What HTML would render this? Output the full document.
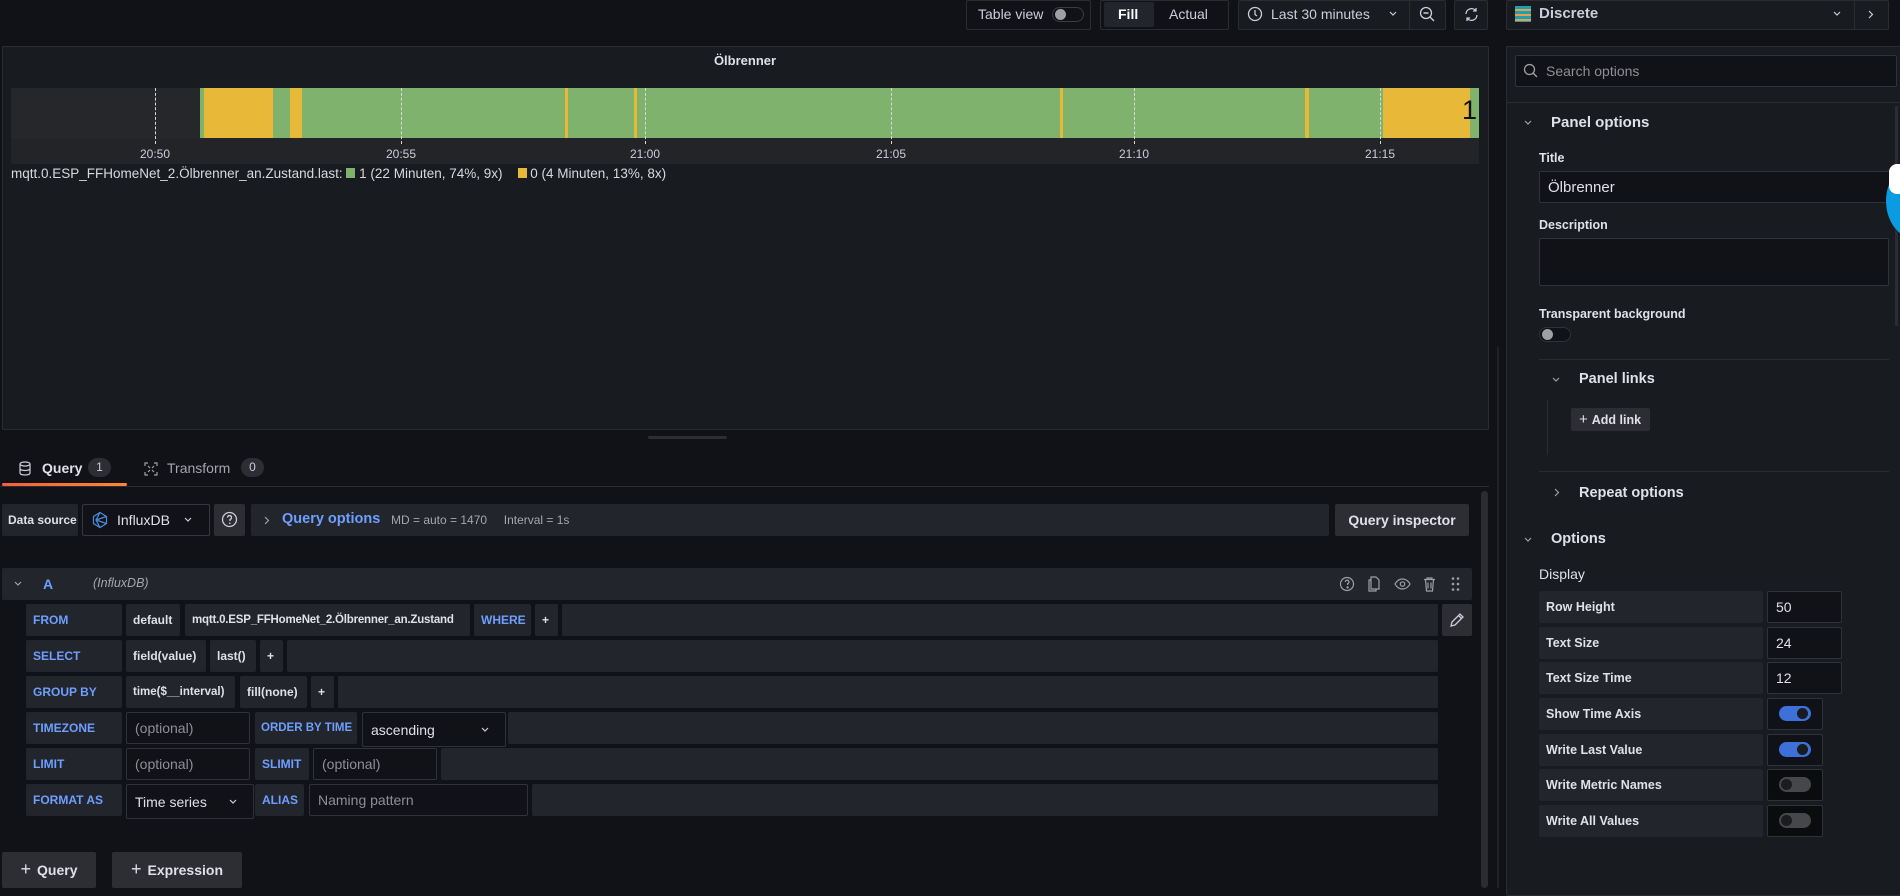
<!DOCTYPE html>
<html><head><meta charset="utf-8"><style>
*{box-sizing:border-box;margin:0;padding:0}
body{width:1900px;height:888px;overflow:hidden;background:#111217;font-family:"Liberation Sans",sans-serif;color:#ccccdc;position:relative;font-size:14px}
.a{position:absolute;white-space:nowrap}
.box{position:absolute;background:#181b1f;border:1px solid #2a2c31;border-radius:2px}
.lbl{position:absolute;background:#22252b;border-radius:2px;display:flex;align-items:center;padding-left:7px;font-size:12px;font-weight:bold;white-space:nowrap;overflow:hidden}
.blue{color:#6e9fff}
.inp{position:absolute;background:#111217;border:1px solid #2f3238;border-radius:2px;display:flex;align-items:center;padding-left:8px;font-size:14px;white-space:nowrap}
.ph{color:#8e8e96}
.dash{position:absolute;width:0;border-left:1px dashed #d8d8d8;top:88px;height:56px}
.tl{position:absolute;top:147px;font-size:12px;color:#ccccdc;transform:translateX(-50%)}
.seg{position:absolute;top:88px;height:50px}
.g{background:#7eb26d}.y{background:#e8b838}
.tog{position:absolute;width:32px;height:15px;border-radius:8px}
.knob{position:absolute;top:2px;width:11px;height:11px;border-radius:50%}
</style></head><body>

<!-- top bar -->
<div class="box" style="left:966px;top:0;width:125px;height:30px;background:#111217"></div>
<div class="a" style="left:978px;top:6px;font-size:14px;color:#ccccdc">Table view</div>
<div class="tog" style="left:1052px;top:7px;border:1px solid #3a3c42;background:#111217"><div class="knob" style="left:2px;top:1px;background:#9fa0a6"></div></div>
<div class="box" style="left:1100px;top:0;width:129px;height:30px;background:#111217"></div>
<div class="a" style="left:1104px;top:2px;width:50px;height:25px;background:#22252b;border-radius:2px"></div>
<div class="a" style="left:1118px;top:6px;font-weight:bold;color:#fff">Fill</div>
<div class="a" style="left:1169px;top:6px">Actual</div>
<div class="box" style="left:1238px;top:0;width:208px;height:30px;background:#181b1f"></div>
<svg class="a" style="left:1247px;top:6px" width="16" height="16" viewBox="0 0 16 16"><circle cx="8" cy="8" r="6.5" fill="none" stroke="#ccccdc" stroke-width="1.3"/><path d="M8 4v4.5l2 1.5" fill="none" stroke="#ccccdc" stroke-width="1.3"/></svg>
<div class="a" style="left:1271px;top:6px">Last 30 minutes</div>
<svg class="a" style="left:1389px;top:11px" width="8" height="6" viewBox="0 0 8 6"><path d="M1 1l3 3 3-3" fill="none" stroke="#ccccdc" stroke-width="1.2"/></svg>
<div class="a" style="left:1409px;top:0;width:1px;height:30px;background:#2a2c31"></div>
<svg class="a" style="left:1419px;top:6px" width="17" height="17" viewBox="0 0 17 17"><circle cx="7" cy="7" r="5.5" fill="none" stroke="#ccccdc" stroke-width="1.3"/><path d="M4.5 7h5M11 11l4 4" stroke="#ccccdc" stroke-width="1.4"/></svg>
<div class="box" style="left:1454px;top:0;width:34px;height:30px"></div>
<svg class="a" style="left:1463px;top:6px" width="17" height="17" viewBox="0 0 17 17"><path d="M3 8a5.5 5.5 0 0 1 10-3M14 9a5.5 5.5 0 0 1-10 3" fill="none" stroke="#ccccdc" stroke-width="1.3"/><path d="M13 2v3h-3M4 15v-3h3" fill="none" stroke="#ccccdc" stroke-width="1.3"/></svg>
<div class="box" style="left:1506px;top:0;width:383px;height:30px"></div>
<div class="a" style="left:1515px;top:6px;width:16px;height:16px;background:repeating-linear-gradient(#1ca0b5 0 3px,#e8a048 3px 5px)"></div>
<div class="a" style="left:1539px;top:5px;font-weight:bold;font-size:15px">Discrete</div>
<svg class="a" style="left:1833px;top:11px" width="8" height="6" viewBox="0 0 8 6"><path d="M1 1l3 3 3-3" fill="none" stroke="#ccccdc" stroke-width="1.2"/></svg>
<div class="a" style="left:1854px;top:0;width:1px;height:30px;background:#2a2c31"></div>
<svg class="a" style="left:1868px;top:10px" width="6" height="9" viewBox="0 0 6 9"><path d="M1 1l3.5 3.5L1 8" fill="none" stroke="#ccccdc" stroke-width="1.2"/></svg>

<!-- panel -->
<div class="box" style="left:2px;top:46px;width:1487px;height:384px"></div>
<div class="a" style="left:0;width:1490px;top:53px;text-align:center;font-size:13px;font-weight:bold;color:#e0e0ea">Ölbrenner</div>
<div class="a" style="left:11px;top:88px;width:1468px;height:76px;background:#232428"></div>
<div class="seg" style="left:11px;width:189px;background:#26272b"></div>
<div class="seg g" style="left:200px;width:4px"></div>
<div class="seg y" style="left:204px;width:69px"></div>
<div class="seg g" style="left:273px;width:17px"></div>
<div class="seg y" style="left:290px;width:12px"></div>
<div class="seg g" style="left:302px;width:263px"></div>
<div class="seg y" style="left:565px;width:3px"></div>
<div class="seg g" style="left:568px;width:66px"></div>
<div class="seg y" style="left:634px;width:3px"></div>
<div class="seg g" style="left:637px;width:423px"></div>
<div class="seg y" style="left:1060px;width:3px"></div>
<div class="seg g" style="left:1063px;width:242px"></div>
<div class="seg y" style="left:1305px;width:4px"></div>
<div class="seg g" style="left:1309px;width:74px"></div>
<div class="seg y" style="left:1383px;width:87px"></div>
<div class="seg g" style="left:1470px;width:9px"></div>
<div class="a" style="left:1462px;top:95px;font-size:27px;color:#111;font-weight:300">1</div>
<div class="dash" style="left:155px"></div><div class="dash" style="left:401px"></div><div class="dash" style="left:645px"></div><div class="dash" style="left:891px"></div><div class="dash" style="left:1134px"></div><div class="dash" style="left:1380px"></div>
<div class="tl" style="left:155px">20:50</div><div class="tl" style="left:401px">20:55</div><div class="tl" style="left:645px">21:00</div><div class="tl" style="left:891px">21:05</div><div class="tl" style="left:1134px">21:10</div><div class="tl" style="left:1380px">21:15</div>
<div class="a" style="left:11px;top:166px;font-size:13.5px;color:#d8d9e0">mqtt.0.ESP_FFHomeNet_2.Ölbrenner_an.Zustand.last: <span style="display:inline-block;width:9px;height:10px;background:#7eb26d"></span> 1 (22 Minuten, 74%, 9x) &nbsp;&nbsp; <span style="display:inline-block;width:9px;height:10px;background:#e8b838"></span> 0 (4 Minuten, 13%, 8x)</div>
<div class="a" style="left:648px;top:436px;width:79px;height:3px;background:#2c2e33;border-radius:2px"></div>

<!-- tabs -->
<svg class="a" style="left:19px;top:461px" width="12" height="15" viewBox="0 0 12 15"><ellipse cx="6" cy="3" rx="5" ry="2" fill="none" stroke="#ccccdc" stroke-width="1.2"/><path d="M1 3v9c0 1.2 2.2 2 5 2s5-.8 5-2V3M1 7.5c0 1.2 2.2 2 5 2s5-.8 5-2" fill="none" stroke="#ccccdc" stroke-width="1.2"/></svg>
<div class="a" style="left:42px;top:460px;font-weight:bold;color:#e0e0ea">Query</div>
<div class="a" style="left:88px;top:458px;width:23px;height:19px;border-radius:10px;background:#2c2e33;font-size:12px;text-align:center;line-height:19px">1</div>
<svg class="a" style="left:144px;top:462px" width="14" height="14" viewBox="0 0 14 14"><path d="M1 4V1h3M10 1h3v3M13 10v3h-3M4 13H1v-3M4 4l2 2M10 4l-2 2M4 10l2-2M10 10l-2-2" fill="none" stroke="#9fa0a6" stroke-width="1.2"/></svg>
<div class="a" style="left:167px;top:460px;color:#a5a6ae">Transform</div>
<div class="a" style="left:241px;top:458px;width:23px;height:19px;border-radius:10px;background:#2c2e33;font-size:12px;text-align:center;line-height:19px">0</div>
<div class="a" style="left:2px;top:483px;width:125px;height:3px;border-radius:2px;background:linear-gradient(90deg,#f55f3e,#ff8833)"></div>
<div class="a" style="left:0;top:486px;width:1489px;height:1px;background:#2a2c31"></div>

<!-- left scrollbar -->
<div class="a" style="left:1481px;top:491px;width:7px;height:397px;background:#2a2c31;border-radius:4px"></div>
<div class="a" style="left:1497px;top:347px;width:2px;height:541px;background:#1f2126"></div>

<!-- data source row -->
<div class="lbl" style="left:2px;top:504px;width:76px;height:32px;color:#e0e0ea;padding-left:6px">Data source</div>
<div class="inp" style="left:82px;top:504px;width:128px;height:32px;border-color:#34373d"><svg width="18" height="18" viewBox="0 0 18 18" style="margin-right:8px"><path d="M9 1.5l6.5 4v7L9 16.5 2.5 12.5v-7z M9 1.5L5 9l4 7.5M5 9l10.5-3.5M5 9l10.5 3.5" fill="none" stroke="#4c8bdc" stroke-width="1.2"/></svg><span style="color:#e0e0ea">InfluxDB</span><svg style="margin-left:14px" width="8" height="6" viewBox="0 0 8 6"><path d="M1 1l3 3 3-3" fill="none" stroke="#ccccdc" stroke-width="1.2"/></svg></div>
<div class="a" style="left:214px;top:504px;width:31px;height:32px;background:#2c2e33;border-radius:2px"></div>
<svg class="a" style="left:221px;top:511px" width="17" height="17" viewBox="0 0 17 17"><circle cx="8.5" cy="8.5" r="7" fill="none" stroke="#ccccdc" stroke-width="1.3"/><path d="M6.5 6.5a2 2 0 1 1 2.5 2v1.5" fill="none" stroke="#ccccdc" stroke-width="1.3"/><circle cx="8.8" cy="12.3" r=".8" fill="#ccccdc"/></svg>
<div class="a" style="left:251px;top:504px;width:1078px;height:32px;background:#22252b;border-radius:2px"></div>
<svg class="a" style="left:264px;top:516px" width="6" height="9" viewBox="0 0 6 9"><path d="M1 1l3.5 3.5L1 8" fill="none" stroke="#9fa0a6" stroke-width="1.2"/></svg>
<div class="a" style="left:282px;top:511px;font-size:14.5px;font-weight:bold;color:#6e9fff">Query options</div>
<div class="a" style="left:391px;top:513px;font-size:12px;color:#a5a6ae">MD = auto = 1470 &nbsp;&nbsp;&nbsp; Interval = 1s</div>
<div class="a" style="left:1335px;top:504px;width:134px;height:32px;background:#2c2e33;border-radius:2px;font-weight:bold;color:#e0e0ea;text-align:center;line-height:32px;font-size:14px">Query inspector</div>

<!-- query A header -->
<div class="a" style="left:2px;top:568px;width:1470px;height:32px;background:#22252b;border-radius:2px"></div>
<svg class="a" style="left:14px;top:581px" width="8" height="6" viewBox="0 0 8 6"><path d="M1 1l3 3 3-3" fill="none" stroke="#9fa0a6" stroke-width="1.2"/></svg>
<div class="a" style="left:43px;top:576px;font-weight:bold;color:#6e9fff">A</div>
<div class="a" style="left:93px;top:576px;font-style:italic;font-size:12.5px;color:#a5a6ae">(InfluxDB)</div>
<svg class="a" style="left:1340px;top:575px" width="130" height="18" viewBox="0 0 130 18" fill="none" stroke="#9fa0a6" stroke-width="1.2"><circle cx="7" cy="9" r="6.5"/><path d="M5.3 7a1.8 1.8 0 1 1 2.3 1.7v1.3"/><circle cx="7.6" cy="12.4" r=".6" fill="#9fa0a6"/><path d="M31 5h-2v11h7v-2M31 2h5l3 3v9h-8z"/><path d="M55 9c2-3.5 4.5-5 7.5-5s5.5 1.5 7.5 5c-2 3.5-4.5 5-7.5 5s-5.5-1.5-7.5-5z"/><circle cx="62.5" cy="9" r="2.2"/><path d="M84 4.5h11M87 4.5V3h5v1.5M85.5 4.5l1 11.5h6l1-11.5M88 7.5v6M91 7.5v6"/><g fill="#9fa0a6" stroke="none"><circle cx="113" cy="3.5" r="1.3"/><circle cx="118" cy="3.5" r="1.3"/><circle cx="113" cy="9" r="1.3"/><circle cx="118" cy="9" r="1.3"/><circle cx="113" cy="14.5" r="1.3"/><circle cx="118" cy="14.5" r="1.3"/></g></svg>

<!-- query rows -->
<div class="lbl blue" style="left:26px;top:604px;width:96px;height:32px">FROM</div>
<div class="lbl" style="left:126px;top:604px;width:54px;height:32px;color:#e0e0ea">default</div>
<div class="lbl" style="left:185px;top:604px;width:285px;height:32px;color:#e0e0ea;font-size:11.5px;letter-spacing:-0.2px">mqtt.0.ESP_FFHomeNet_2.Ölbrenner_an.Zustand</div>
<div class="lbl blue" style="left:474px;top:604px;width:57px;height:32px">WHERE</div>
<div class="lbl" style="left:535px;top:604px;width:23px;height:32px;color:#e0e0ea">+</div>
<div class="lbl" style="left:562px;top:604px;width:876px;height:32px"></div>
<div class="a" style="left:1442px;top:604px;width:30px;height:32px;background:#2c2e33;border-radius:2px"></div>
<svg class="a" style="left:1449px;top:612px" width="16" height="16" viewBox="0 0 16 16"><path d="M2 14l1-4 8-8 3 3-8 8zM9.5 3.5l3 3" fill="none" stroke="#ccccdc" stroke-width="1.3"/></svg>

<div class="lbl blue" style="left:26px;top:640px;width:96px;height:32px">SELECT</div>
<div class="lbl" style="left:126px;top:640px;width:80px;height:32px;color:#e0e0ea">field(value)</div>
<div class="lbl" style="left:210px;top:640px;width:46px;height:32px;color:#e0e0ea">last()</div>
<div class="lbl" style="left:260px;top:640px;width:23px;height:32px;color:#e0e0ea">+</div>
<div class="lbl" style="left:287px;top:640px;width:1151px;height:32px"></div>

<div class="lbl blue" style="left:26px;top:676px;width:96px;height:32px">GROUP BY</div>
<div class="lbl" style="left:126px;top:676px;width:109px;height:32px;color:#e0e0ea;font-size:11.5px">time($__interval)</div>
<div class="lbl" style="left:240px;top:676px;width:67px;height:32px;color:#e0e0ea">fill(none)</div>
<div class="lbl" style="left:311px;top:676px;width:23px;height:32px;color:#e0e0ea">+</div>
<div class="lbl" style="left:338px;top:676px;width:1100px;height:32px"></div>

<div class="lbl blue" style="left:26px;top:712px;width:96px;height:32px">TIMEZONE</div>
<div class="inp ph" style="left:126px;top:712px;width:124px;height:32px">(optional)</div>
<div class="lbl blue" style="left:255px;top:712px;width:102px;height:32px;font-size:11.5px;padding-left:6px">ORDER BY TIME</div>
<div class="inp" style="left:362px;top:712px;width:144px;height:35px;color:#e0e0ea">ascending<svg style="position:absolute;right:16px;top:14px" width="8" height="6" viewBox="0 0 8 6"><path d="M1 1l3 3 3-3" fill="none" stroke="#ccccdc" stroke-width="1.2"/></svg></div>
<div class="lbl" style="left:508px;top:712px;width:930px;height:32px"></div>

<div class="lbl blue" style="left:26px;top:748px;width:96px;height:32px">LIMIT</div>
<div class="inp ph" style="left:126px;top:748px;width:124px;height:32px">(optional)</div>
<div class="lbl blue" style="left:255px;top:748px;width:54px;height:32px">SLIMIT</div>
<div class="inp ph" style="left:313px;top:748px;width:124px;height:32px">(optional)</div>
<div class="lbl" style="left:441px;top:748px;width:997px;height:32px"></div>

<div class="lbl blue" style="left:26px;top:784px;width:96px;height:32px">FORMAT AS</div>
<div class="inp" style="left:126px;top:784px;width:128px;height:35px;color:#e0e0ea">Time series<svg style="position:absolute;right:16px;top:14px" width="8" height="6" viewBox="0 0 8 6"><path d="M1 1l3 3 3-3" fill="none" stroke="#ccccdc" stroke-width="1.2"/></svg></div>
<div class="lbl blue" style="left:255px;top:784px;width:49px;height:32px">ALIAS</div>
<div class="inp ph" style="left:309px;top:784px;width:219px;height:32px">Naming pattern</div>
<div class="lbl" style="left:532px;top:784px;width:906px;height:32px"></div>

<div class="a" style="left:2px;top:852px;width:94px;height:36px;background:#2c2e33;border-radius:2px;text-align:center;line-height:34px;font-weight:bold;color:#e0e0ea"><span style="font-size:18px;font-weight:normal;margin-right:6px">+</span>Query</div>
<div class="a" style="left:112px;top:852px;width:130px;height:36px;background:#2c2e33;border-radius:2px;text-align:center;line-height:34px;font-weight:bold;color:#e0e0ea"><span style="font-size:18px;font-weight:normal;margin-right:6px">+</span>Expression</div>

<!-- right options pane -->
<div class="box" style="left:1506px;top:46px;width:400px;height:850px"></div>
<div class="inp ph" style="left:1515px;top:55px;width:382px;height:32px;padding-left:30px">Search options</div>
<svg class="a" style="left:1523px;top:63px" width="16" height="16" viewBox="0 0 16 16"><circle cx="6.5" cy="6.5" r="5" fill="none" stroke="#9fa0a6" stroke-width="1.3"/><path d="M10 10l4 4" stroke="#9fa0a6" stroke-width="1.3"/></svg>
<div class="a" style="left:1507px;top:102px;width:393px;height:1px;background:#2a2c31"></div>
<div class="a" style="left:1895px;top:106px;width:3px;height:220px;background:#2a2c31"></div>
<svg class="a" style="left:1524px;top:120px" width="8" height="6" viewBox="0 0 8 6"><path d="M1 1l3 3 3-3" fill="none" stroke="#9fa0a6" stroke-width="1.2"/></svg>
<div class="a" style="left:1551px;top:114px;font-weight:bold;font-size:15px;color:#e0e0ea">Panel options</div>
<div class="a" style="left:1539px;top:151px;font-size:12.5px;font-weight:bold;color:#e0e0ea">Title</div>
<div class="inp" style="left:1539px;top:171px;width:361px;height:32px;color:#e0e0ea;font-size:15px">Ölbrenner</div>
<div class="a" style="left:1539px;top:218px;font-size:12.5px;font-weight:bold;color:#e0e0ea">Description</div>
<div class="inp" style="left:1539px;top:238px;width:350px;height:48px"></div>
<div class="a" style="left:1539px;top:307px;font-size:12.5px;font-weight:bold;color:#e0e0ea">Transparent background</div>
<div class="tog" style="left:1539px;top:327px;border:1px solid #2f3238;background:#111217"><div class="knob" style="left:2px;top:1px;background:#9fa0a6"></div></div>
<div class="a" style="left:1539px;top:359px;width:350px;height:1px;background:#2a2c31"></div>
<svg class="a" style="left:1552px;top:377px" width="8" height="6" viewBox="0 0 8 6"><path d="M1 1l3 3 3-3" fill="none" stroke="#9fa0a6" stroke-width="1.2"/></svg>
<div class="a" style="left:1579px;top:371px;font-weight:bold;font-size:14.5px;color:#e0e0ea">Panel links</div>
<div class="a" style="left:1547px;top:400px;width:1px;height:55px;background:#2a2c31"></div>
<div class="a" style="left:1571px;top:408px;width:79px;height:23px;background:#2c2e33;border-radius:2px;font-size:12.5px;font-weight:bold;color:#e0e0ea;line-height:23px;padding-left:8px"><span style="font-weight:normal;font-size:15px;margin-right:4px">+</span>Add link</div>
<div class="a" style="left:1539px;top:471px;width:350px;height:1px;background:#2a2c31"></div>
<svg class="a" style="left:1554px;top:488px" width="6" height="9" viewBox="0 0 6 9"><path d="M1 1l3.5 3.5L1 8" fill="none" stroke="#9fa0a6" stroke-width="1.2"/></svg>
<div class="a" style="left:1579px;top:485px;font-weight:bold;font-size:14.5px;color:#e0e0ea">Repeat options</div>
<svg class="a" style="left:1524px;top:537px" width="8" height="6" viewBox="0 0 8 6"><path d="M1 1l3 3 3-3" fill="none" stroke="#9fa0a6" stroke-width="1.2"/></svg>
<div class="a" style="left:1551px;top:531px;font-weight:bold;font-size:14.5px;color:#e0e0ea">Options</div>
<div class="a" style="left:1539px;top:566px;font-size:14px;color:#e0e0ea">Display</div>

<div class="lbl" style="left:1539px;top:591px;width:224px;height:32px;color:#e0e0ea;font-size:12.5px">Row Height</div>
<div class="inp" style="left:1767px;top:591px;width:75px;height:32px;color:#e0e0ea">50</div>
<div class="lbl" style="left:1539px;top:627px;width:224px;height:32px;color:#e0e0ea;font-size:12.5px">Text Size</div>
<div class="inp" style="left:1767px;top:627px;width:75px;height:32px;color:#e0e0ea">24</div>
<div class="lbl" style="left:1539px;top:662px;width:224px;height:32px;color:#e0e0ea;font-size:12.5px">Text Size Time</div>
<div class="inp" style="left:1767px;top:662px;width:75px;height:32px;color:#e0e0ea">12</div>
<div class="lbl" style="left:1539px;top:698px;width:224px;height:32px;color:#e0e0ea;font-size:12.5px">Show Time Axis</div>
<div class="inp" style="left:1767px;top:698px;width:56px;height:32px"></div>
<div class="tog" style="left:1779px;top:706px;background:#3d71d9"><div class="knob" style="left:18px;background:#181b1f"></div></div>
<div class="lbl" style="left:1539px;top:734px;width:224px;height:32px;color:#e0e0ea;font-size:12.5px">Write Last Value</div>
<div class="inp" style="left:1767px;top:734px;width:56px;height:32px"></div>
<div class="tog" style="left:1779px;top:742px;background:#3d71d9"><div class="knob" style="left:18px;background:#181b1f"></div></div>
<div class="lbl" style="left:1539px;top:769px;width:224px;height:32px;color:#e0e0ea;font-size:12.5px">Write Metric Names</div>
<div class="inp" style="left:1767px;top:769px;width:56px;height:32px;background:#0b0c0e"></div>
<div class="tog" style="left:1779px;top:777px;background:#46474b"><div class="knob" style="left:2px;background:#1b1c20"></div></div>
<div class="lbl" style="left:1539px;top:805px;width:224px;height:32px;color:#e0e0ea;font-size:12.5px">Write All Values</div>
<div class="inp" style="left:1767px;top:805px;width:56px;height:32px;background:#0b0c0e"></div>
<div class="tog" style="left:1779px;top:813px;background:#46474b"><div class="knob" style="left:2px;background:#1b1c20"></div></div>

<!-- blue blob at edge -->
<div class="a" style="left:1886px;top:163px;width:60px;height:76px;border-radius:50%;background:#0a9be0"></div>
<div class="a" style="left:1889px;top:164px;width:20px;height:30px;border-radius:8px;background:#fff"></div>
</body></html>
